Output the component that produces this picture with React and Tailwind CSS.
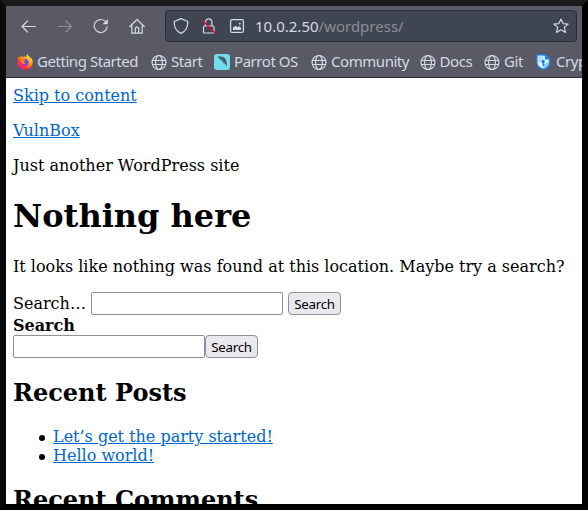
import React from 'react';

function Globe() {
  return (
    <svg width="16" height="16" viewBox="0 0 16 16" fill="none" stroke="#d3dae3" strokeWidth="1.2">
      <circle cx="8" cy="8.500" r="7" />
      <ellipse cx="8" cy="8.500" rx="3.4" ry="7" />
      <path d="M1.500 6.500h13M1.500 10.500h13" />
    </svg>
  );
}

function Firefox() {
  return (
    <svg width="16" height="16" viewBox="0 0 16 16">
      <defs>
        <linearGradient id="fox" x1="0.85" y1="0.1" x2="0.2" y2="0.95">
          <stop offset="0" stopColor="#fff44f" />
          <stop offset="0.4" stopColor="#ff980e" />
          <stop offset="0.7" stopColor="#ff3647" />
          <stop offset="1" stopColor="#e31587" />
        </linearGradient>
      </defs>
      <path
        d="M10.4 0c-.9 1.1-1.1 2-.9 3-1-.6-2.600-.7-3.800 0C4.800 2.800 4.300 2.200 4.200 1.500 3.500 2 3.200 2.700 3.100 3.400 2.600 3.200 2.200 2.700 2 2.300.8 3.900.2 5.700.3 8a7.700 7.700 0 0 0 15.400.300c0-2.100-.7-3.700-1.700-4.600.1.500.2.900.1 1.300C13.300 2.700 11 2.200 10.400 0z"
        fill="url(#fox)"
      />
      <circle cx="8.200" cy="8.300" r="3.300" fill="#7542e5" />
      <path d="M3.500 5.500c1.400-.6 2.600-.4 3.500.2l1.900.3c0 .8-1.500 1-1.800 1.600-.3.700.2 1.700 1.300 1.800-1.500 1.200-3.600.3-4-1.200z" fill="#ff8a16" />
    </svg>
  );
}

function Parrot() {
  return (
    <svg width="16" height="16" viewBox="0 0 16 16">
      <rect width="16" height="16" rx="3" fill="#70dfec" />
      <path d="M3 2.700c3-1 6.500-.6 8.200 1.800 1.700 2.300 1.900 5 1.300 8.700-.4-1.800-1-3.200-2.200-4.300L10 10C9.200 8.500 8.600 7.200 7.500 6l-.8.300-.4-1.200-1.200.1-.2-1.100C4.300 3.500 3.700 3.100 3 2.700z" fill="#45626f" />
    </svg>
  );
}

function CryptoShield() {
  return (
    <svg width="16" height="16" viewBox="0 0 16 16">
      <path d="M1 1h8l4.500 4v4c0 3-2.500 5-6.200 6.500C3.500 14 1 12 1 9z" fill="#e9f5ff" stroke="#1684ee" strokeWidth="1.400" />
      <path d="M7.300 10v5C10.500 13.700 12.800 11.500 12.800 9V8z" fill="#85c8ff" />
      <path d="M7.300 1.700v6L1.700 9V1.700z" fill="#b5deff" />
      <path d="M8.800 1v4.400h4.700z" fill="#1684ee" />
      <circle cx="7.200" cy="7.500" r="1.700" fill="#1684ee" />
      <path d="M6.500 8h1.500v4h-1.500z" fill="#1684ee" />
    </svg>
  );
}

const bookmarks = [
  { label: 'Getting Started', icon: <Firefox />, size: 'w-[134px]' },
  { label: 'Start', icon: <Globe />, size: 'w-[63px]' },
  { label: 'Parrot OS', icon: <Parrot />, size: 'w-[97px]' },
  { label: 'Community', icon: <Globe />, size: 'w-[108.5px]' },
  { label: 'Docs', icon: <Globe />, size: 'w-[64.5px]' },
  { label: 'Git', icon: <Globe />, size: 'w-[52px]' },
  { label: 'Crypto', icon: <CryptoShield />, size: 'w-[80px]' },
];

function NavIcon({ children, dim }) {
  return (
    <svg
      className={dim ? 'shrink-0 opacity-40' : 'shrink-0'}
      width="16" height="16" viewBox="0 0 16 16" fill="none"
      stroke="#d3dae3" strokeWidth="1.2" strokeLinecap="round" strokeLinejoin="round"
    >
      {children}
    </svg>
  );
}

function Toolbar() {
  return (
    <header className="h-[72px] overflow-hidden border-b border-[#2b2e39] bg-[#595a66] font-['Noto_Sans',sans-serif] text-[#d3dae3]">
      <div className="flex h-[40px] items-center pl-[15px]">
        <div className="flex w-[144px] gap-5">
          <NavIcon><path d="M14.300 8.500H1M6.500 3L1 8.500 6.500 14" /></NavIcon>
          <NavIcon dim><path d="M1 8.500h13.300M9 3l5.300 5.500L9 14" /></NavIcon>
          <NavIcon>
            <path d="M14.200 8.800a6.500 6.500 0 1 1-2.200-5.700" />
            <path d="M14.800 1v5.200H9.500z" fill="#d3dae3" stroke="none" />
          </NavIcon>
          <NavIcon>
            <path d="M.8 8.500L8 1.500l7.200 7M2.800 7.200v8h10.400v-8M6.300 15v-4.200a1.700 1.700 0 0 1 3.400 0V15" />
          </NavIcon>
        </div>
        <div className="flex h-[32px] w-[412px] items-center rounded-[4px] border border-[#2b2e39] bg-[#404552] pl-[7px]">
          <NavIcon><path d="M8 .6l6.800 2.900c.1 5.200-1.600 9.500-6.800 11.900C2.800 13 1.100 8.700 1.200 3.500z" /></NavIcon>
          <svg className="ml-[12px]" width="16" height="16" viewBox="0 0 16 16" fill="none" stroke="#d3dae3" strokeWidth="1.200">
            <rect x="2.500" y="8" width="10.500" height="7" rx="1" />
            <path d="M4.500 8V4a3.200 3.200 0 0 1 6.400 0v4" />
            <path d="M1 2l13.300 13.300" stroke="#e6003c" strokeWidth="1.300" />
          </svg>
          <svg className="ml-[12px]" width="16" height="16" viewBox="0 0 16 16" fill="none" stroke="#d3dae3" strokeWidth="1.300">
            <rect x="1.600" y="1.600" width="12.800" height="12.800" rx="1.500" />
            <path d="M4 12V9.500l2.500-1.700 2.200 1.400L10 8l2 1.800V12z" fill="#d3dae3" stroke="none" />
            <circle cx="10.800" cy="5.700" r="1" fill="#d3dae3" stroke="none" />
          </svg>
          <div className="ml-[9px] w-[299px] pt-px pl-px text-[15px] whitespace-nowrap">
            10.0.2.50<span className="text-[#8a8f98]">/wordpress/</span>
          </div>
          <NavIcon><path d="M8 1l2.100 4.600 5 .5-3.800 3.300 1.200 5L8 11.800l-4.500 2.600 1.200-5L.9 6.100l5-.5z" /></NavIcon>
        </div>
      </div>
      <nav className="flex h-[31px] items-center pl-[11px] text-[15px] tracking-[-0.45px]">
        {bookmarks.map((b) => (
          <div key={b.label} className={`flex shrink-0 items-center gap-1 whitespace-nowrap ${b.size}`}>
            <span className="shrink-0">{b.icon}</span>
            <span>{b.label}</span>
          </div>
        ))}
      </nav>
    </header>
  );
}

function SearchButton() {
  return (
    <button className="h-[23px] w-[53px] rounded-[4px] border border-[#8f8f9d] bg-[#e9e9ed] font-['Noto_Sans',sans-serif] text-[13.333px] leading-[20px] tracking-[-0.3px]">
      Search
    </button>
  );
}

function SearchInput() {
  return <input className="h-[23px] w-[192px] rounded-[2px] border border-[#8f8f9d] bg-white px-1" />;
}

function Link({ children }) {
  return <a href="#" className="text-[#0066cc] underline">{children}</a>;
}

function PostItem({ children }) {
  return (
    <li className="flex items-center">
      <span className="mt-[2px] mr-2 size-[6px] rounded-full bg-black" />
      <Link>{children}</Link>
    </li>
  );
}

export default function App() {
  return (
    <div className="flex h-[510px] w-[588px] flex-col overflow-hidden border-6 border-t-[#1a1a1a] border-r-black border-b-black border-l-[#0a0a0a] bg-white">
      <Toolbar />
      <main className="min-h-0 flex-1 overflow-hidden pt-2 pl-[7px] font-['DejaVu_Serif',serif] text-base leading-[19px] whitespace-nowrap text-black">
        <p><Link>Skip to content</Link></p>
        <p className="mt-4"><Link>VulnBox</Link></p>
        <p className="mt-4">Just another WordPress site</p>
        <h1 className="mt-[22px] text-[32px] leading-[38px] font-bold">Nothing here</h1>
        <p className="mt-[22px]">It looks like nothing was found at this location. Maybe try a search?</p>
        <form className="mt-4 flex h-[23px]">
          <label className="w-[78px] pt-0.5">Search…</label>
          <SearchInput />
          <span className="w-[5px]" />
          <SearchButton />
        </form>
        <div className="mt-px h-[19px] font-bold">Search</div>
        <form className="flex">
          <SearchInput />
          <SearchButton />
        </form>
        <h2 className="mt-[21px] text-2xl leading-7 font-bold">Recent Posts</h2>
        <ul className="mt-[20px] pl-[26px]">
          <PostItem>Let’s get the party started!</PostItem>
          <PostItem>Hello world!</PostItem>
        </ul>
        <h2 className="mt-[21px] text-2xl leading-7 font-bold">Recent Comments</h2>
      </main>
    </div>
  );
}
